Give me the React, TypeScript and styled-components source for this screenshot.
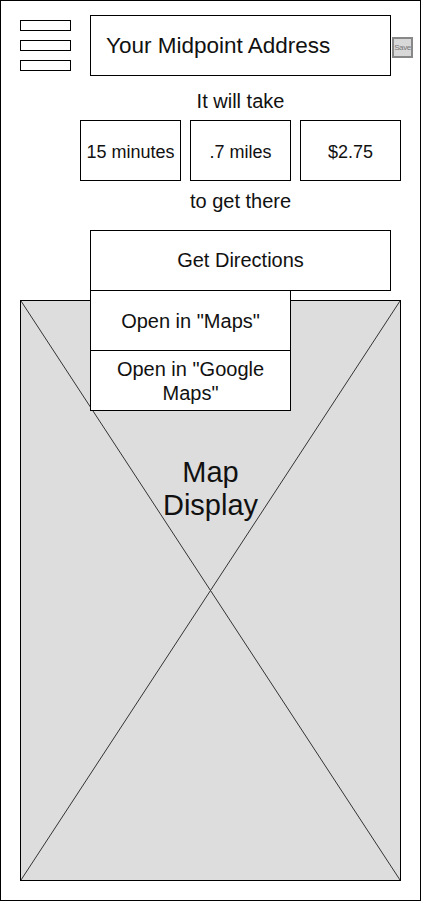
import React from "react";
import styled, { createGlobalStyle } from "styled-components";

const GlobalStyle = createGlobalStyle`
  html, body {
    margin: 0;
    padding: 0;
    background: #fff;
  }

  body {
    font-family: "Liberation Sans", Arial, sans-serif;
    color: #111;
  }
`;

const Frame = styled.div`
  box-sizing: border-box;
  width: 421px;
  height: 901px;
  border: 1px solid #000;
  display: flex;
  flex-direction: column;
`;

const Header = styled.div`
  display: flex;
  align-items: center;
  padding: 14px 0 0 19px;
`;

const Hamburger = styled.div`
  display: flex;
  flex-direction: column;
  gap: 9px;

  & span {
    box-sizing: border-box;
    display: block;
    width: 51px;
    height: 11px;
    border: 1px solid #000;
  }
`;

const AddressBox = styled.div`
  box-sizing: border-box;
  width: 301px;
  height: 61px;
  margin-left: 19px;
  border: 1px solid #000;
  display: flex;
  align-items: center;
  padding-left: 15px;
  font-size: 22.5px;
`;

const SaveButton = styled.button`
  box-sizing: border-box;
  width: 21px;
  height: 21px;
  margin: 4px 0 0 1px;
  padding: 0;
  border: 2px solid #888;
  background: #d8d8d8;
  color: #777;
  font-family: "Liberation Sans", Arial, sans-serif;
  font-size: 8px;
  letter-spacing: -0.4px;
  display: flex;
  align-items: center;
  justify-content: center;
  overflow: hidden;
`;

const Trip = styled.div`
  width: 321px;
  margin-left: 79px;
  display: flex;
  flex-direction: column;
  align-items: center;
`;

const Caption = styled.div<{ $top: number }>`
  margin-top: ${(p) => p.$top}px;
  font-size: 20px;
  line-height: 22px;
  text-align: center;
`;

const StatRow = styled.div`
  display: flex;
  gap: 9px;
  margin-top: 8px;
`;

const StatBox = styled.div`
  box-sizing: border-box;
  width: 101px;
  height: 61px;
  border: 1px solid #000;
  display: flex;
  align-items: center;
  justify-content: center;
  padding-top: 4px;
  font-size: 18px;
  white-space: nowrap;
`;

const DirectionsWrap = styled.div`
  position: relative;
  z-index: 2;
  width: 301px;
  margin: 18px 0 0 89px;
`;

const DirectionsButton = styled.div`
  box-sizing: border-box;
  width: 301px;
  height: 61px;
  border: 1px solid #000;
  background: #fff;
  display: flex;
  align-items: center;
  justify-content: center;
  font-size: 20px;
`;

const Menu = styled.div`
  position: absolute;
  top: 60px;
  left: 0;
  width: 201px;
  display: flex;
  flex-direction: column;
`;

const MenuItem = styled.div`
  box-sizing: border-box;
  height: 61px;
  margin-top: -1px;
  border: 1px solid #000;
  background: #fff;
  display: flex;
  align-items: center;
  justify-content: center;
  text-align: center;
  padding: 2px 8px 0;
  font-size: 20px;
  line-height: 23.5px;

  &:first-child {
    margin-top: 0;
  }
`;

const MapBox = styled.div`
  position: relative;
  box-sizing: border-box;
  width: 381px;
  height: 581px;
  margin: 9px 0 0 19px;
  border: 1px solid #000;
  background: #dddddd;
  display: flex;
  justify-content: center;
  padding-top: 155px;
`;

const MapCross = styled.svg`
  position: absolute;
  inset: 0;
  width: 100%;
  height: 100%;
`;

const MapLabel = styled.div`
  position: relative;
  font-size: 29px;
  line-height: 33px;
  text-align: center;
`;

const stats = ["15 minutes", ".7 miles", "$2.75"];

const App = () => {
  return (
    <>
      <GlobalStyle />
      <Frame>
        <Header>
          <Hamburger>
            <span />
            <span />
            <span />
          </Hamburger>
          <AddressBox>Your Midpoint Address</AddressBox>
          <SaveButton>Save</SaveButton>
        </Header>

        <Trip>
          <Caption $top={14}>It will take</Caption>
          <StatRow>
            {stats.map((s) => (
              <StatBox key={s}>{s}</StatBox>
            ))}
          </StatRow>
          <Caption $top={9}>to get there</Caption>
        </Trip>

        <DirectionsWrap>
          <DirectionsButton>Get Directions</DirectionsButton>
          <Menu>
            <MenuItem>Open in "Maps"</MenuItem>
            <MenuItem>Open in "Google Maps"</MenuItem>
          </Menu>
        </DirectionsWrap>

        <MapBox>
          <MapCross viewBox="0 0 100 100" preserveAspectRatio="none">
            <line x1="0" y1="0" x2="100" y2="100" stroke="#333" strokeWidth="1" vectorEffect="non-scaling-stroke" />
            <line x1="100" y1="0" x2="0" y2="100" stroke="#333" strokeWidth="1" vectorEffect="non-scaling-stroke" />
          </MapCross>
          <MapLabel>
            Map
            <br />
            Display
          </MapLabel>
        </MapBox>
      </Frame>
    </>
  );
};

export default App;
